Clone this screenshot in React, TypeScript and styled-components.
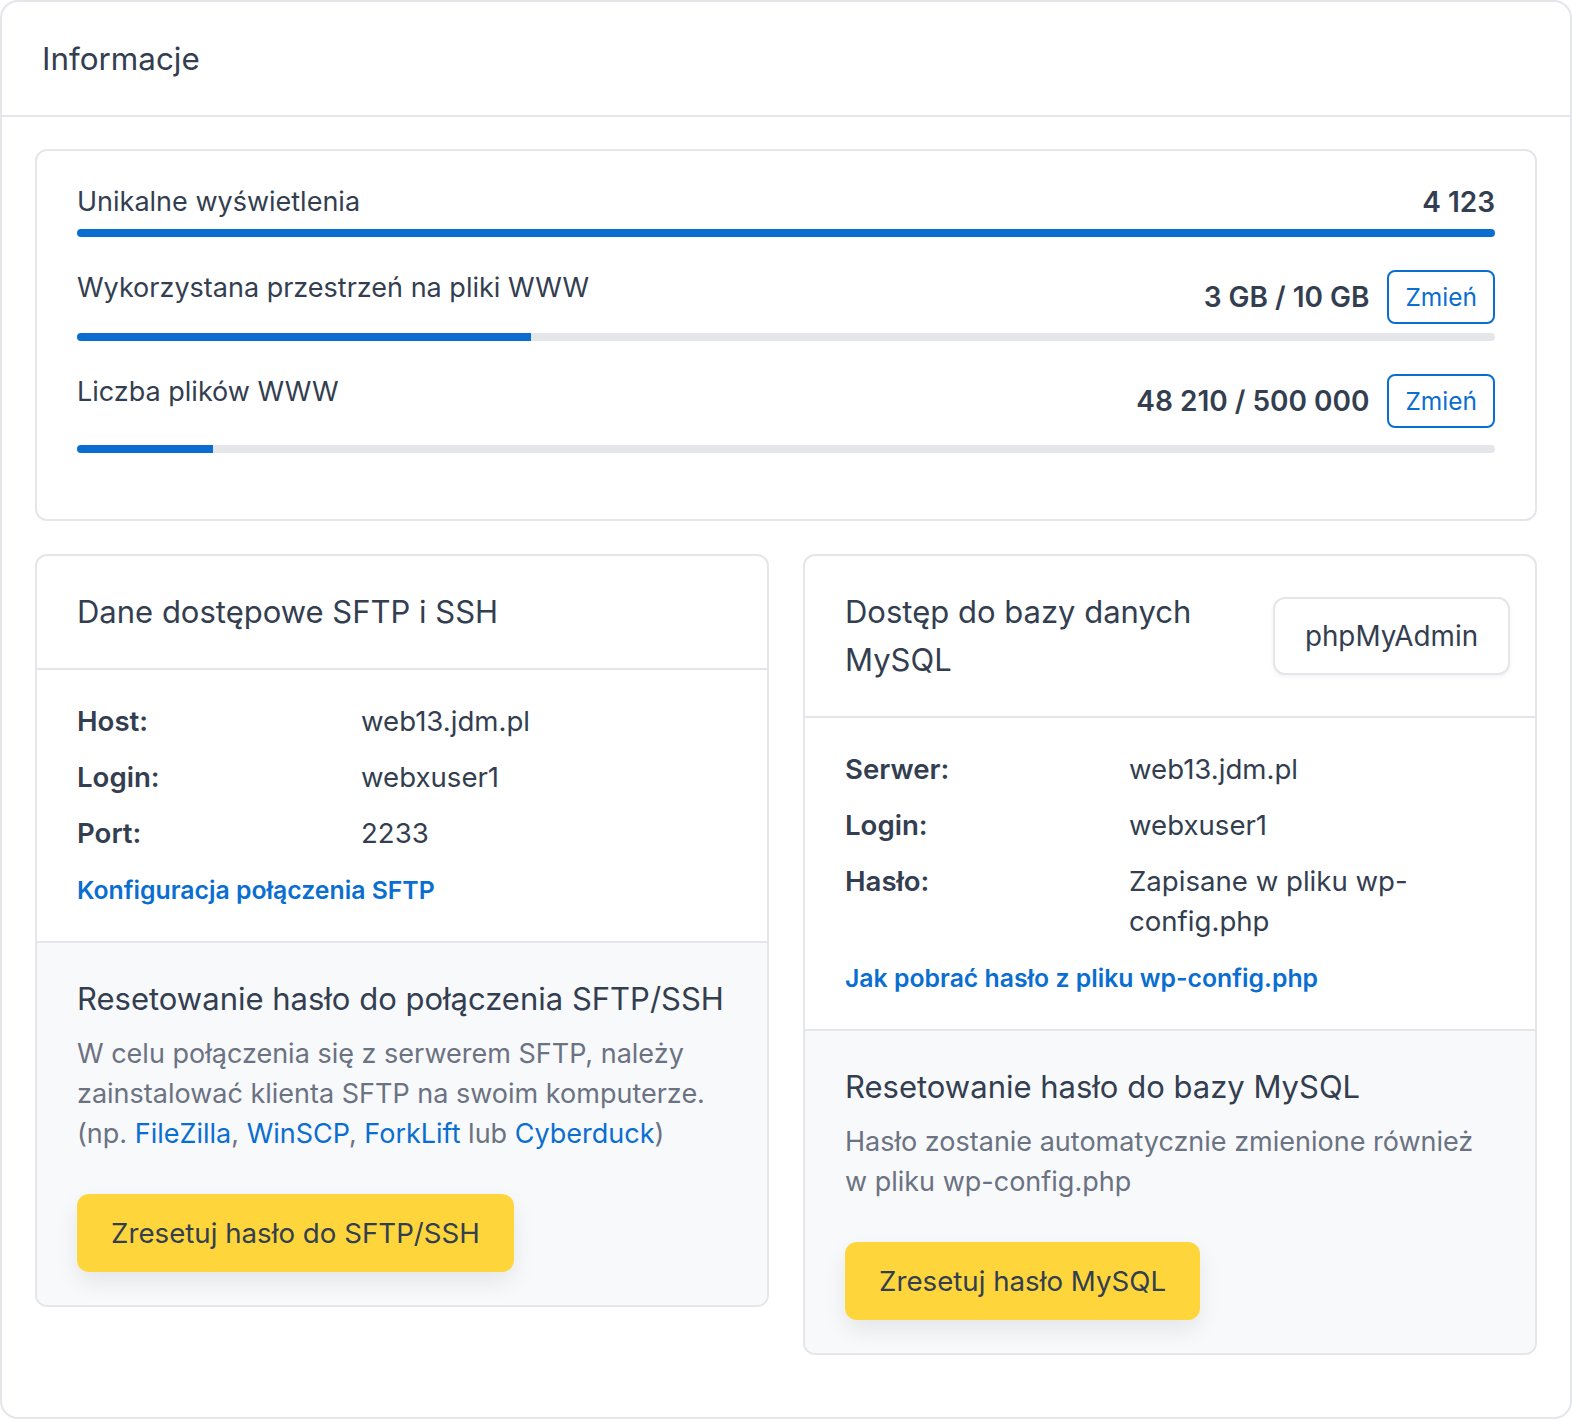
import styled, { createGlobalStyle } from "styled-components"

const GlobalStyle = createGlobalStyle`
  * { box-sizing: border-box; }
  body {
    margin: 0;
    background: #ffffff;
    font-family: Inter, "Noto Sans", "Liberation Sans", sans-serif;
    color: #333e50;
    -webkit-font-smoothing: antialiased;
  }
`

const BLUE = "#0a6ed1"
const LINE = "#e4e6ea"

interface Stat {
    label: string
    value: string
    percent: number
    barGap: number
    editable?: boolean
}

const stats: Stat[] = [
    { label: "Unikalne wyświetlenia", value: "4 123", percent: 100, barGap: 9 },
    { label: "Wykorzystana przestrzeń na pliki WWW", value: "3 GB / 10 GB", percent: 32, barGap: 9, editable: true },
    { label: "Liczba plików WWW", value: "48 210 / 500 000", percent: 9.6, barGap: 17, editable: true },
]

const App = () => {
    return (
        <>
            <GlobalStyle />
            <Panel>
                <PanelHeader>Informacje</PanelHeader>

                <PanelBody>
                    <StatsCard>
                        {stats.map((s) => (
                            <StatRow key={s.label}>
                                <StatTop>
                                    <StatLabel>{s.label}</StatLabel>
                                    <StatRight>
                                        <StatValue>{s.value}</StatValue>
                                        {s.editable && <OutlineButton>Zmień</OutlineButton>}
                                    </StatRight>
                                </StatTop>
                                <Track $gap={s.barGap}>
                                    <Fill style={{ width: `${s.percent}%` }} />
                                </Track>
                            </StatRow>
                        ))}
                    </StatsCard>

                    <Columns>
                        <Card>
                            <CardHeader>
                                <CardTitle>Dane dostępowe SFTP i SSH</CardTitle>
                            </CardHeader>
                            <CardSection>
                                <InfoGrid>
                                    <InfoLabel>Host:</InfoLabel>
                                    <InfoValue>web13.jdm.pl</InfoValue>
                                    <InfoLabel>Login:</InfoLabel>
                                    <InfoValue>webxuser1</InfoValue>
                                    <InfoLabel>Port:</InfoLabel>
                                    <InfoValue>2233</InfoValue>
                                </InfoGrid>
                                <HelpLink href="#">Konfiguracja połączenia SFTP</HelpLink>
                            </CardSection>
                            <ResetSection>
                                <ResetTitle>Resetowanie hasło do połączenia SFTP/SSH</ResetTitle>
                                <ResetText>
                                    W celu połączenia się z serwerem SFTP, należy zainstalować klienta SFTP na swoim
                                    komputerze. (np. <TextLink href="#">FileZilla</TextLink>,{" "}
                                    <TextLink href="#">WinSCP</TextLink>, <TextLink href="#">ForkLift</TextLink> lub{" "}
                                    <TextLink href="#">Cyberduck</TextLink>)
                                </ResetText>
                                <YellowButton>Zresetuj hasło do SFTP/SSH</YellowButton>
                            </ResetSection>
                        </Card>

                        <Card>
                            <CardHeader $tight>
                                <CardTitle $narrow>Dostęp do bazy danych MySQL</CardTitle>
                                <WhiteButton>phpMyAdmin</WhiteButton>
                            </CardHeader>
                            <CardSection>
                                <InfoGrid>
                                    <InfoLabel>Serwer:</InfoLabel>
                                    <InfoValue>web13.jdm.pl</InfoValue>
                                    <InfoLabel>Login:</InfoLabel>
                                    <InfoValue>webxuser1</InfoValue>
                                    <InfoLabel>Hasło:</InfoLabel>
                                    <InfoValue>Zapisane w pliku wp-config.php</InfoValue>
                                </InfoGrid>
                                <HelpLink href="#">Jak pobrać hasło z pliku wp-config.php</HelpLink>
                            </CardSection>
                            <ResetSection>
                                <ResetTitle>Resetowanie hasło do bazy MySQL</ResetTitle>
                                <ResetText>
                                    Hasło zostanie automatycznie zmienione również w pliku wp-config.php
                                </ResetText>
                                <YellowButton>Zresetuj hasło MySQL</YellowButton>
                            </ResetSection>
                        </Card>
                    </Columns>
                </PanelBody>
            </Panel>
        </>
    )
}

export default App


const Panel = styled.div`
    width: 1572px;
    min-height: 1419px;
    border: 2px solid ${LINE};
    border-radius: 18px;
    background: #fff;
`

const PanelHeader = styled.h1`
    margin: 0;
    height: 115px;
    display: flex;
    align-items: center;
    padding: 0 40px;
    font-size: 31.4px;
    font-weight: 400;
    color: #333e50;
    border-bottom: 2px solid ${LINE};
`

const PanelBody = styled.div`
    padding: 32px 33px 40px;
    display: flex;
    flex-direction: column;
    gap: 33px;
`

const StatsCard = styled.div`
    border: 2px solid ${LINE};
    border-radius: 12px;
    padding: 33px 40px 66px;
    display: flex;
    flex-direction: column;
    gap: 33px;
`

const StatRow = styled.div`
    display: flex;
    flex-direction: column;
`

const StatTop = styled.div`
    display: flex;
    justify-content: space-between;
    align-items: flex-start;
`

const StatLabel = styled.span`
    font-size: 27px;
    line-height: 36px;
    color: #333e50;
`

const StatRight = styled.div`
    display: flex;
    align-items: center;
    gap: 18px;
`

const StatValue = styled.span`
    font-size: 28px;
    line-height: 36px;
    font-weight: 600;
    color: #333e50;
`

const OutlineButton = styled.button`
    height: 54px;
    padding: 0 16px;
    border: 2px solid ${BLUE};
    border-radius: 8px;
    background: #fff;
    color: ${BLUE};
    font-family: inherit;
    font-size: 24.5px;
    cursor: pointer;
`

const Track = styled.div<{ $gap: number }>`
    margin-top: ${(p) => p.$gap}px;
    height: 8px;
    border-radius: 4px;
    background: #e5e6ea;
    overflow: hidden;
`

const Fill = styled.div`
    height: 100%;
    background: ${BLUE};
`

const Columns = styled.div`
    display: grid;
    grid-template-columns: 1fr 1fr;
    gap: 34px;
    align-items: start;
`

const Card = styled.div`
    border: 2px solid ${LINE};
    border-radius: 12px;
    overflow: hidden;
    background: #fff;
`

const CardHeader = styled.div<{ $tight?: boolean }>`
    display: flex;
    justify-content: space-between;
    align-items: center;
    gap: 24px;
    padding: 32px ${(p) => (p.$tight ? "25px" : "40px")} 32px 40px;
    border-bottom: 2px solid ${LINE};
`

const CardTitle = styled.h2<{ $narrow?: boolean }>`
    margin: 0;
    font-size: 31px;
    line-height: 48px;
    font-weight: 400;
    color: #333e50;
    max-width: ${(p) => (p.$narrow ? "380px" : "none")};
`

const WhiteButton = styled.button`
    flex-shrink: 0;
    width: 237px;
    height: 78px;
    border: 2px solid ${LINE};
    border-radius: 12px;
    background: #fff;
    box-shadow: 0 2px 4px rgba(0, 0, 0, 0.05);
    font-family: inherit;
    font-size: 27.8px;
    color: #333e50;
    cursor: pointer;
`

const CardSection = styled.div`
    padding: 31px 40px;
    border-bottom: 2px solid ${LINE};
    display: flex;
    flex-direction: column;
    align-items: flex-start;
    gap: 17px;
`

const InfoGrid = styled.div`
    display: grid;
    grid-template-columns: 284px 1fr;
    row-gap: 16px;
    width: 100%;
`

const InfoLabel = styled.span`
    font-size: 27.6px;
    line-height: 40px;
    font-weight: 600;
    color: #333e50;
`

const InfoValue = styled.span`
    font-size: 27.6px;
    line-height: 40px;
    color: #333e50;
`

const HelpLink = styled.a`
    font-size: 24.8px;
    line-height: 40px;
    font-weight: 600;
    color: ${BLUE};
    text-decoration: none;
`

const ResetSection = styled.div`
    background: #f8f9fb;
    padding: 32px 40px 33px;
    display: flex;
    flex-direction: column;
    align-items: flex-start;
`

const ResetTitle = styled.h3`
    margin: 0;
    font-size: 31px;
    line-height: 48px;
    font-weight: 400;
    color: #333e50;
    white-space: nowrap;
`

const ResetText = styled.p`
    margin: 11px 0 40px;
    font-size: 27px;
    line-height: 40px;
    color: #6b7282;
`

const TextLink = styled.a`
    color: ${BLUE};
    text-decoration: none;
`

const YellowButton = styled.button`
    height: 78px;
    padding: 0 34px;
    border: none;
    border-radius: 12px;
    background: #fed63b;
    box-shadow: 0 10px 22px rgba(0, 0, 0, 0.08);
    font-family: inherit;
    font-size: 27.7px;
    color: #333e50;
    cursor: pointer;
`
